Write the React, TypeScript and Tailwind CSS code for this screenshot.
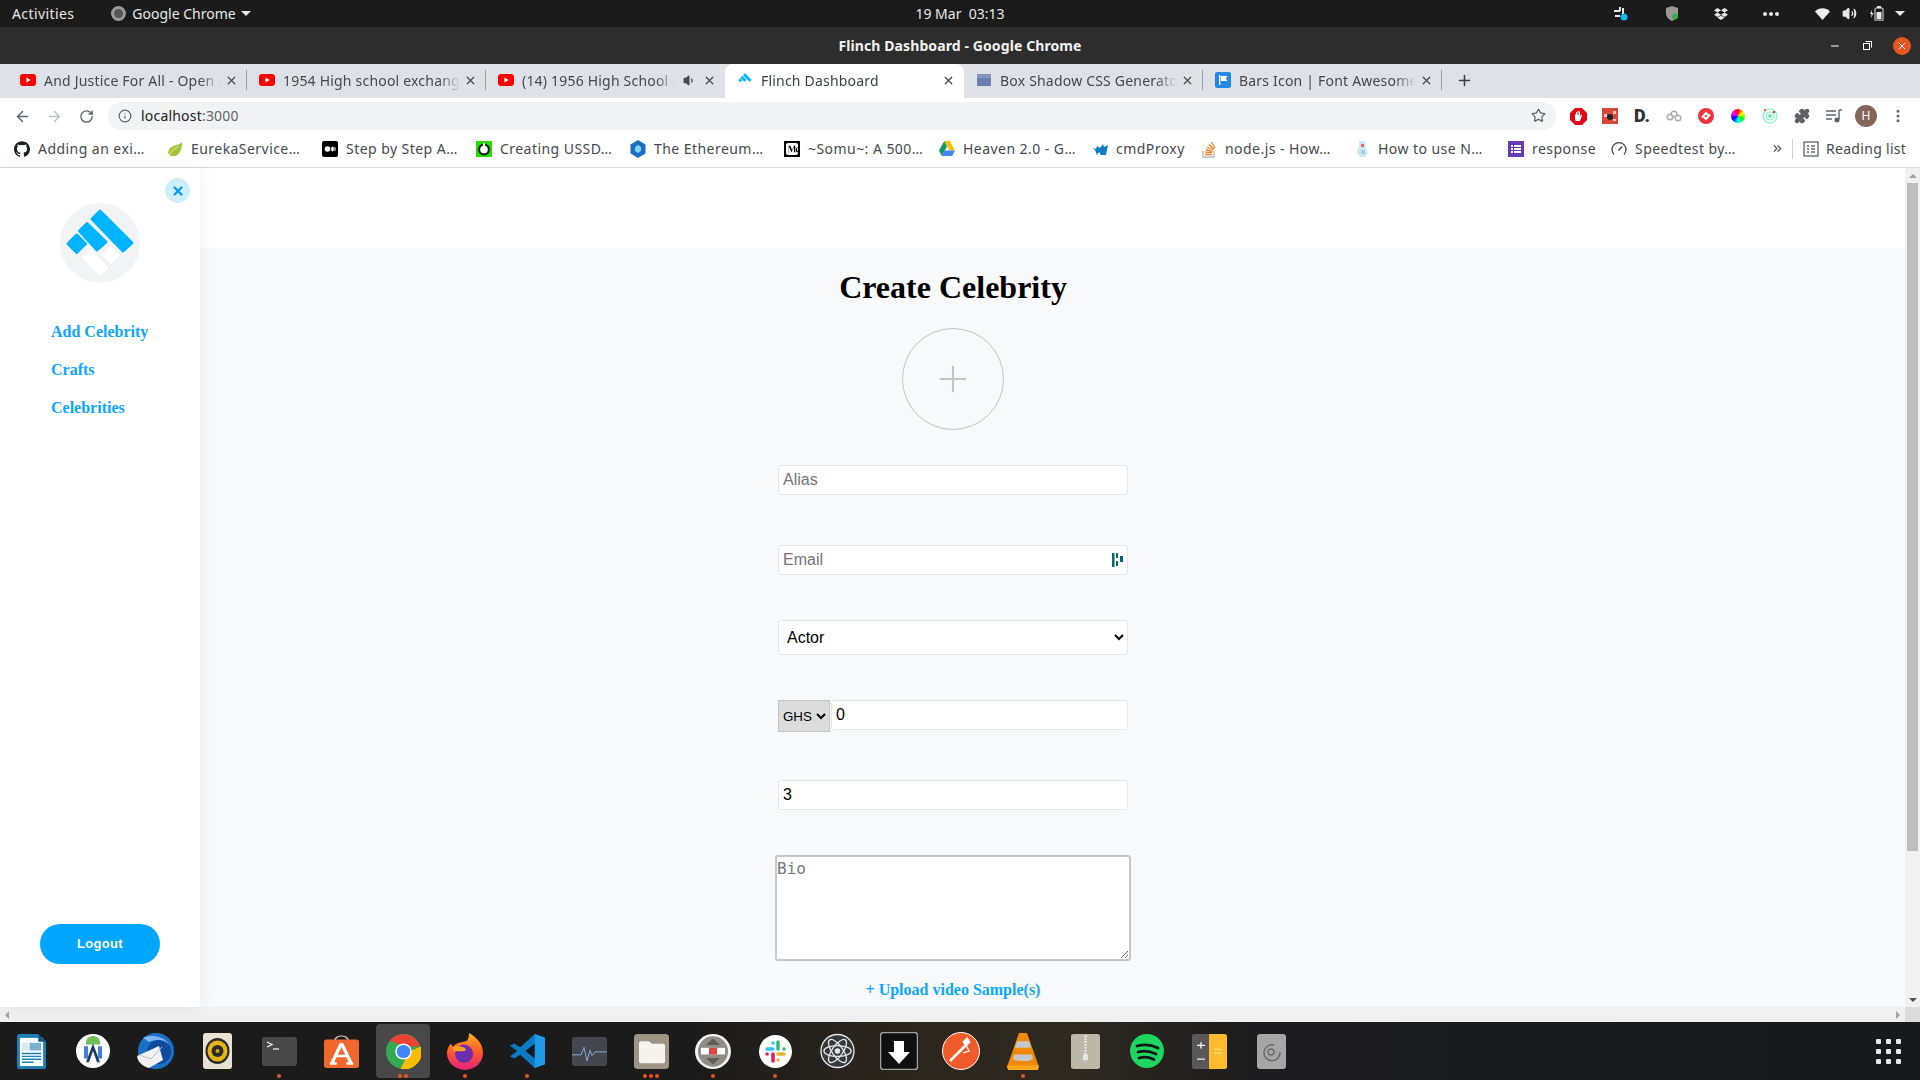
import React from 'react';
import { ArrowLeft, ArrowRight, RotateCw, Info, Star, X, Plus, MoreVertical, Puzzle, ChevronsRight, Minus, Volume2, Volume1 } from 'lucide-react';
import { SiGithub, SiMedium, SiDropbox } from 'react-icons/si';

const uiFont = "font-['Noto_Sans','Open_Sans',sans-serif]";

const Youtube = () => (
  <svg width="16" height="16" viewBox="0 0 16 16" className="shrink-0">
    <rect x="0" y="2" width="16" height="12" rx="3" fill="#f00" />
    <path d="M6.4 5.4 10.6 8l-4.2 2.6z" fill="#fff" />
  </svg>
);

const FlinchLogo = ({ size = 16, outline = false }: { size?: number; outline?: boolean }) => (
  <svg width={size} height={size} viewBox="0 0 80 80" className="shrink-0">
    <g fill="#00b4ff" stroke="#00b4ff" strokeWidth="3" strokeLinejoin="round">
      <polygon points="40,8 72,40 63,48 32,16" />
      <polygon points="27,20.5 46,39 37,47 19.5,28" />
      <polygon points="16.7,32 25.5,40.7 16.7,49.5 8,40.7" />
    </g>
    <g fill="#fff" stroke={outline ? '#eceded' : '#fff'} strokeWidth="1" strokeLinejoin="round">
      <polygon points="50.7,42 60.7,52 50.7,62 40.7,52" />
      <polygon points="30,45.3 50,64.7 40,73.7 20.7,54.7" />
    </g>
  </svg>
);

const tabs = [
  { title: 'And Justice For All - Open Culture', icon: <Youtube /> },
  { title: '1954 High school exchange students', icon: <Youtube /> },
  { title: '(14) 1956 High School Exchange', icon: <Youtube />, audio: true },
  { title: 'Flinch Dashboard', icon: <FlinchLogo />, active: true },
  {
    title: 'Box Shadow CSS Generator',
    icon: (
      <svg width="16" height="16" viewBox="0 0 16 16" className="shrink-0">
        <rect x="1" y="2" width="14" height="12" rx="1" fill="#6b7db3" />
        <rect x="1" y="2" width="14" height="4" fill="#8492bd" />
      </svg>
    ),
  },
  {
    title: 'Bars Icon | Font Awesome',
    icon: (
      <svg width="16" height="16" viewBox="0 0 16 16" className="shrink-0">
        <rect width="16" height="16" rx="2" fill="#228ae6" />
        <path d="M4 3h1.4v10H4zM6 4h6.5l-1.6 2.5L12.5 9H6z" fill="#fff" />
      </svg>
    ),
  },
];

const bookmarks = [
  { label: 'Adding an exi…', w: 'w-[153px]', icon: <SiGithub size={16} color="#1b1f23" /> },
  {
    label: 'EurekaService…',
    w: 'w-[155px]',
    icon: (
      <svg width="18" height="18" viewBox="0 0 18 18">
        <path d="M17 1C14 5 5 4 2 10c-2 4 1 7 5 7 7 0 10-7 10-16z" fill="#a4c639" />
        <path d="M3 15c3-5 6-7 10-9" stroke="#e8f2c0" strokeWidth="1" fill="none" />
      </svg>
    ),
  },
  {
    label: 'Step by Step A…',
    w: 'w-[154px]',
    icon: (
      <svg width="16" height="16" viewBox="0 0 16 16">
        <rect width="16" height="16" rx="2" fill="#000" />
        <circle cx="5.5" cy="8" r="2.8" fill="#fff" />
        <ellipse cx="10.5" cy="8" rx="1.4" ry="2.6" fill="#fff" />
        <ellipse cx="13" cy="8" rx="0.6" ry="2.3" fill="#fff" />
      </svg>
    ),
  },
  {
    label: 'Creating USSD…',
    w: 'w-[154px]',
    icon: (
      <svg width="16" height="16" viewBox="0 0 16 16">
        <rect width="16" height="16" fill="#22e000" />
        <circle cx="8" cy="8.5" r="6" fill="#222" />
        <circle cx="8" cy="8.5" r="3.8" fill="#fff" />
        <rect x="7" y="2" width="2" height="5" fill="#fff" />
      </svg>
    ),
  },
  {
    label: 'The Ethereum…',
    w: 'w-[154px]',
    icon: (
      <svg width="16" height="18" viewBox="0 0 16 18">
        <path d="M8 0l7.5 4.5v9L8 18 .5 13.500v-9z" fill="#1a6fc4" />
        <path d="M8 5l3 2v4l-3 2-3-2V7z" fill="#7fd4f0" />
      </svg>
    ),
  },
  {
    label: '~Somu~: A 500…',
    w: 'w-[155px]',
    icon: (
      <span className="flex h-4 w-4 items-center justify-center bg-black">
        <SiMedium size={12} color="#fff" />
      </span>
    ),
  },
  {
    label: 'Heaven 2.0 - G…',
    w: 'w-[153px]',
    icon: (
      <svg width="16" height="15" viewBox="0 0 16 15">
        <path d="M5.300 0h5.400l5.300 9.500h-5.400z" fill="#fbbc04" />
        <path d="M5.300 0 0 9.500 2.700 15l5.300-9.500z" fill="#0f9d58" />
        <path d="M2.700 15h10.600L16 9.500H5.400z" fill="#4285f4" />
      </svg>
    ),
  },
  {
    label: 'cmdProxy',
    w: 'w-[109px]',
    icon: (
      <svg width="16" height="12" viewBox="0 0 16 12">
        <path d="M0 5l4 1 1-3 3 2 3-4 1 3 4-2-2 10H9L7 9l-2 3-2-5z" fill="#0e7fc2" />
      </svg>
    ),
  },
  {
    label: 'node.js - How…',
    w: 'w-[153px]',
    icon: (
      <svg width="14" height="18" viewBox="0 0 14 18">
        <path d="M1 11v6h11v-6" stroke="#bcbbbb" strokeWidth="1.400" fill="none" />
        <path d="M3 14.500h7M3.200 12l7 .6M3.800 9.500l6.800 1.800M5 7l6.200 3M7 4.500l5 4.500M9.500 2l3.500 6" stroke="#f48024" strokeWidth="1.300" />
      </svg>
    ),
  },
  {
    label: 'How to use N…',
    w: 'w-[154px]',
    icon: (
      <svg width="14" height="18" viewBox="0 0 14 18">
        <path d="M4 1h6l1 6 2 6-3 4H5L2 12l2-5z" fill="#cfe8f6" />
        <path d="M6 4h3v3H6z" fill="#e9685a" />
        <path d="M6 10h4v4H6z" fill="#9fd0ee" />
      </svg>
    ),
  },
  {
    label: 'response',
    w: 'w-[103px]',
    icon: (
      <svg width="16" height="16" viewBox="0 0 16 16">
        <rect width="16" height="16" fill="#673ab7" />
        <path d="M3 4h2v2H3zM6 4h7v2H6zM3 7h2v2H3zM6 7h7v2H6zM3 10h2v2H3zM6 10h7v2H6z" fill="#fff" />
      </svg>
    ),
  },
  {
    label: 'Speedtest by…',
    w: 'w-[154px]',
    icon: (
      <svg width="16" height="16" viewBox="0 0 16 16" fill="none" stroke="#444" strokeWidth="1.300">
        <path d="M3 13.500A7 7 0 1 1 13 13.500" />
        <path d="M7.500 9.500 11 5.500" />
      </svg>
    ),
  },
];

const Ext = ({ children }: { children: React.ReactNode }) => (
  <div className="flex h-7 w-8 items-center justify-center">{children}</div>
);

const Extensions = () => (
  <div className="flex items-center">
    <Ext>
      <svg width="17" height="17" viewBox="0 0 17 17">
        <path d="M5 0h7l5 5v7l-5 5H5l-5-5V5z" fill="#e30613" />
        <path d="M5 12V6.500h1V4h1v3h.5V3h1v4H9V3.500h1V8l1.500-1.500.7.500L10 13H6z" fill="#fff" />
      </svg>
    </Ext>
    <Ext>
      <svg width="16" height="16" viewBox="0 0 16 16">
        <rect width="16" height="16" fill="#d9483b" />
        <circle cx="8" cy="9" r="3" fill="#222" />
        <path d="M2 6h3v3H2zM11 3h3v3h-3zM11 11h3v2h-3z" fill="#f6c9c4" />
      </svg>
    </Ext>
    <Ext>
      <span className="font-['Roboto',sans-serif] text-[18px] leading-none font-black text-[#333]">D.</span>
    </Ext>
    <Ext>
      <svg width="16" height="12" viewBox="0 0 16 12" fill="none" stroke="#aaa" strokeWidth="1.400">
        <circle cx="4" cy="7" r="2.800" />
        <circle cx="8" cy="4" r="2.800" />
        <circle cx="12" cy="8" r="2.800" />
      </svg>
    </Ext>
    <Ext>
      <svg width="16" height="16" viewBox="0 0 16 16">
        <circle cx="8" cy="8" r="8" fill="#f0333c" />
        <path d="M4 9.500 8 5l2 2M12 6.500 8 11 6 9" stroke="#fff" strokeWidth="2" fill="none" />
      </svg>
    </Ext>
    <Ext>
      <div className="h-[14px] w-[14px] rounded-full bg-[conic-gradient(#f00,#ff0,#0f0,#0ff,#00f,#f0f,#f00)]" />
    </Ext>
    <Ext>
      <svg width="16" height="16" viewBox="0 0 16 16" fill="none" stroke="#7ef0c0" strokeWidth="1.200">
        <circle cx="8" cy="8" r="7" />
        <circle cx="8" cy="8" r="4" />
        <circle cx="8" cy="8" r="1.500" fill="#5fd6a0" />
        <circle cx="3" cy="2" r="1.300" fill="#f08030" stroke="none" />
        <circle cx="12" cy="4" r="1.300" fill="#e04040" stroke="none" />
      </svg>
    </Ext>
    <Ext>
      <Puzzle size={16} fill="#5f6368" color="#5f6368" />
    </Ext>
    <Ext>
      <svg width="16" height="14" viewBox="0 0 16 14" fill="none" stroke="#5f6368" strokeWidth="1.400">
        <path d="M0 2h10M0 6h10M0 10h6" />
        <path d="M13 1v9.500" />
        <circle cx="11" cy="11" r="1.800" fill="#5f6368" />
        <path d="M13 1h3" />
      </svg>
    </Ext>
    <Ext>
      <div className="flex h-[22px] w-[22px] items-center justify-center rounded-full bg-[#84655a] font-['Noto_Sans',sans-serif] text-[12px] text-white">H</div>
    </Ext>
    <Ext>
      <MoreVertical size={16} color="#5f6368" strokeWidth={2.500} />
    </Ext>
  </div>
);

const TopBar = () => (
  <div className="flex h-[27px] shrink-0 items-center justify-between bg-[#1b1b1b] text-[14px] text-[#e8e8e8]">
    <div className="flex w-[400px] items-center pl-3">
      <span className="tracking-[0.4px]">Activities</span>
      <div className="ml-[37px] h-[15px] w-[15px] rounded-full border-[3px] border-[#999] bg-[#555]" />
      <span className="ml-[6px]">Google Chrome</span>
      <span className="ml-[5px] h-0 w-0 border-x-[5px] border-t-[5px] border-x-transparent border-t-[#e8e8e8]" />
    </div>
    <span>19 Mar&nbsp;&nbsp;03:13</span>
    <div className="flex w-[400px] items-center justify-end pr-[15px]">
      <svg width="14" height="14" viewBox="0 0 14 14" className="mr-[37px]">
        <path d="M0 3h6v2H0zM5 0h2v4H5zM1 8h5v2H1zM8 1h2v6H8z" fill="#e8e8e8" />
        <circle cx="10" cy="10" r="3.500" fill="#14b8e8" />
      </svg>
      <svg width="14" height="15" viewBox="0 0 14 15" className="mr-[35px]">
        <path d="M7 0l6 2v5c0 4-3 6.500-6 8-3-1.500-6-4-6-8V2z" fill="#9a9a9a" />
        <circle cx="10" cy="10.500" r="3" fill="#3cb043" />
      </svg>
      <span className="mr-[35px]">
        <SiDropbox size={14} color="#e8e8e8" />
      </span>
      <span className="mr-[36px] flex gap-[2px]">
        <i className="h-1 w-1 rounded-full bg-[#e8e8e8]" />
        <i className="h-1 w-1 rounded-full bg-[#e8e8e8]" />
        <i className="h-1 w-1 rounded-full bg-[#e8e8e8]" />
      </span>
      <svg width="15" height="12" viewBox="0 0 15 12" className="mr-[12px]">
        <path d="M0 3.500C4-.9 11-.9 15 3.500L7.500 12z" fill="#f0f0f0" />
      </svg>
      <Volume2 size={15} color="#e8e8e8" fill="#e8e8e8" className="mr-[13px]" />
      <svg width="14" height="15" viewBox="0 0 14 15" className="mr-[11px]">
        <rect x="5" y="2" width="8" height="13" rx="1" fill="none" stroke="#e8e8e8" />
        <rect x="7" y="0" width="4" height="2" fill="#e8e8e8" />
        <rect x="6.500" y="6" width="5" height="7.500" fill="#e8e8e8" />
        <path d="M2 4 0 8h1.500L1 12l2.500-5H2z" fill="#e8e8e8" />
      </svg>
      <span className="h-0 w-0 border-x-[5px] border-t-[5px] border-x-transparent border-t-[#e8e8e8]" />
    </div>
  </div>
);

const TitleBar = () => (
  <div className="flex h-[37px] shrink-0 items-center justify-between bg-[#2d2d2d] text-[14px] font-bold tracking-[0.1px] text-[#f2f2f2]">
    <div className="w-[200px]" />
    <span>Flinch Dashboard - Google Chrome</span>
    <div className="flex w-[200px] items-center justify-end pr-[9px] text-white">
      <Minus size={12} className="mr-[22px]" />
      <svg width="9" height="9" viewBox="0 0 9 9" fill="none" stroke="#fff" className="mr-[21px]">
        <rect x="0.500" y="2.500" width="6" height="6" />
        <path d="M2.500 .5h6v6" />
      </svg>
      <div className="flex h-[18px] w-[18px] items-center justify-center rounded-full bg-[#e95420]">
        <X size={12} color="#fff" strokeWidth={2} />
      </div>
    </div>
  </div>
);

const TabStrip = () => (
  <div className="flex h-[34px] shrink-0 items-end bg-[#dee1e6] pl-2 text-[14px] tracking-[0.2px] text-[#45494e]">
    {tabs.map((t, i) => (
      <div
        key={t.title}
        className={
          t.active
            ? 'flex h-[34px] w-[239px] items-center rounded-t-lg bg-white pb-[2px] pl-3 text-[#3c4043]'
            : 'flex h-[34px] w-[239px] items-center pb-[2px] pl-3'
        }
      >
        {t.icon}
        <span className="mr-1 ml-2 min-w-0 flex-1 overflow-hidden whitespace-nowrap [mask-image:linear-gradient(to_right,black_88%,transparent)]">{t.title}</span>
        {t.audio && <Volume1 size={13} fill="#45494e" className="mr-[7px] ml-1 shrink-0" />}
        <X size={13} strokeWidth={2.200} className="shrink-0" />
        <span className={i === 0 || i === 1 || i === 4 || i === 5 ? 'ml-2 h-5 w-px shrink-0 bg-[#9aa0a6]' : 'ml-2 h-5 w-px shrink-0'} />
      </div>
    ))}
    <div className="flex h-[34px] flex-1 items-center pb-[2px] pl-[14px]">
      <Plus size={17} color="#3c4043" strokeWidth={2.200} />
    </div>
  </div>
);

const Toolbar = () => (
  <div className="flex h-8 shrink-0 items-end bg-white pl-[14px]">
    <div className="flex h-7 items-center">
      <ArrowLeft size={17} color="#5f6368" strokeWidth={2} />
      <ArrowRight size={17} color="#bdc1c6" strokeWidth={2} className="ml-[15px]" />
      <RotateCw size={15} color="#5f6368" strokeWidth={2.200} className="ml-[16px]" />
      <div className="ml-[14px] flex h-7 w-[1448px] shrink-0 items-center rounded-full bg-[#f1f3f4] pr-[10px] pb-px pl-[10px] text-[14px] tracking-[0.2px]">
        <Info size={14} color="#5f6368" />
        <span className="ml-[9px] text-[#202124]">localhost</span>
        <span className="text-[#5f6368]">:3000</span>
        <Star size={15} color="#5f6368" className="ml-auto" />
      </div>
      <div className="ml-[6px]">
        <Extensions />
      </div>
    </div>
  </div>
);

const Bookmarks = () => (
  <div className="flex h-[38px] shrink-0 items-center border-b border-[#d9d9d9] bg-white pl-[14px] text-[14px] tracking-[0.45px] text-[#45494e]">
    {bookmarks.map((b) => (
      <div key={b.label} className={`flex shrink-0 items-center gap-2 whitespace-nowrap ${b.w}`}>
        <span className="flex w-4 shrink-0 items-center justify-center">{b.icon}</span>
        <span>{b.label}</span>
      </div>
    ))}
    <ChevronsRight size={13} color="#5f6368" strokeWidth={2.500} className="ml-[6px]" />
    <span className="ml-[8px] h-5 w-px bg-[#d0d0d0]" />
    <svg width="16" height="16" viewBox="0 0 16 16" fill="none" stroke="#5f6368" strokeWidth="1.300" className="ml-[10px]">
      <rect x="1" y="1" width="14" height="14" />
      <path d="M4 5h2M8 5h4M4 8h2M8 8h4M4 11h2M8 11h4" />
    </svg>
    <span className="ml-[7px] tracking-[0.3px]">Reading list</span>
  </div>
);

const Sidebar = () => (
  <aside className="z-10 flex w-[200px] shrink-0 flex-col items-center bg-white shadow-[0_0_20px_rgba(0,0,0,0.06)]">
    <div className="flex w-full justify-end pt-[10px] pr-[10px]">
      <button className="flex h-[25px] w-[25px] items-center justify-center rounded-full bg-[#cdeeff]">
        <X size={14} color="#0a9cf5" strokeWidth={4} />
      </button>
    </div>
    <div className="flex h-20 w-20 items-center justify-center rounded-full bg-[#f3f4f6]">
      <FlinchLogo size={80} outline />
    </div>
    <nav className="mt-10 flex w-full flex-col gap-5 pl-[51px] font-['Liberation_Serif',serif] text-[16px] leading-[18px] font-bold text-[#0ca6ff]">
      <a>Add Celebrity</a>
      <a>Crafts</a>
      <a>Celebrities</a>
    </nav>
    <button className="mt-auto mb-[43px] h-10 w-[120px] rounded-full bg-[#00a6ff] font-['Liberation_Sans',sans-serif] text-[13px] font-bold tracking-[0.3px] text-white">
      Logout
    </button>
  </aside>
);

const inputClass =
  'h-[30px] w-[350px] rounded-[3px] border border-[#e4e5e7] bg-white px-1 text-[16px] text-black outline-none placeholder:text-[#757575]';

const CreateForm = () => (
  <div className="flex w-[356px] flex-col items-center font-['Liberation_Sans',sans-serif]">
    <h1 className="mt-[21px] font-['Liberation_Serif',serif] text-[32px] leading-[37px] font-bold whitespace-nowrap text-black">Create Celebrity</h1>
    <div className="mt-[22px] flex h-[102px] w-[102px] items-center justify-center rounded-full border border-[#c4c4c4]">
      <Plus size={42} color="#c4c4c4" strokeWidth={1.200} />
    </div>
    <input className={`mt-[35px] ${inputClass}`} placeholder="Alias" />
    <div className="relative mt-[50px] h-[30px]">
      <input className={inputClass} placeholder="Email" />
      <svg width="11" height="14" viewBox="0 0 11 14" className="absolute top-2 right-[5px]" fill="#0f6474">
        <path d="M0 0h2.500v14H0zM4 0h2v5H4zM4 8h2v5H4zM8 3h3v6H8z" />
      </svg>
    </div>
    <select className="mt-[45px] h-[35px] w-[350px] rounded-[3px] border border-[#e4e5e7] bg-white px-1 text-[16px] text-black outline-none [appearance:auto]" defaultValue="Actor">
      <option>Actor</option>
      <option>Musician</option>
    </select>
    <div className="mt-[45px] flex h-8 w-[350px] items-start">
      <select className="h-8 w-[52px] shrink-0 border border-[#c4c4c4] bg-[#dcdcdc] text-[13.333px] text-black outline-none [appearance:auto]" defaultValue="GHS">
        <option>GHS</option>
      </select>
      <input className={`ml-px !w-[297px] ${inputClass}`} defaultValue="0" />
    </div>
    <input className={`mt-12 ${inputClass}`} defaultValue="3" />
    <textarea
      className="mt-[45px] block h-[106px] w-[356px] rounded-[3px] border-2 border-[#c8c8c8] bg-white p-0 font-['DejaVu_Sans_Mono',monospace] text-[16px] text-black outline-none placeholder:text-[#757575]"
      placeholder="Bio"
    />
    <a className="mt-5 font-['Liberation_Serif',serif] text-[16px] leading-[18px] font-bold whitespace-nowrap text-[#0ca6ff]">+ Upload video Sample(s)</a>
  </div>
);

const VScrollbar = () => (
  <div className="flex w-[15px] shrink-0 flex-col items-center bg-[#f1f1f1]">
    <span className="mt-[6px] h-0 w-0 border-x-[4px] border-b-[4px] border-x-transparent border-b-[#a3a3a3]" />
    <div className="mt-[5px] h-[668px] w-[11px] bg-[#bdbdbd]" />
    <span className="mt-auto mb-[5px] h-0 w-0 border-x-[4px] border-t-[4px] border-x-transparent border-t-[#505050]" />
  </div>
);

const HScrollbar = () => (
  <div className="flex h-[15px] shrink-0 items-center bg-[#f0f0f0]">
    <span className="ml-[5px] h-0 w-0 border-y-[4px] border-r-[4px] border-y-transparent border-r-[#a3a3a3]" />
    <span className="mr-[5px] ml-auto h-0 w-0 border-y-[4px] border-l-[4px] border-y-transparent border-l-[#a3a3a3]" />
    <span className="h-[15px] w-[15px] bg-[#dcdcdc]" />
  </div>
);

const Dot = () => <i className="h-[4px] w-[4px] rounded-full bg-[#e9541f]" />;

const dockIcons: { dots: number; active?: boolean; icon: React.ReactNode }[] = [
  {
    dots: 0,
    icon: (
      <svg width="29" height="35" viewBox="0 0 30 36" preserveAspectRatio="none">
        <path d="M2 0h20l8 8v26a2 2 0 0 1-2 2H2a2 2 0 0 1-2-2V2a2 2 0 0 1 2-2z" fill="#1c7fb5" />
        <rect x="3" y="4" width="24" height="29" fill="#fff" />
        <path d="M5 9h7v8H5z" fill="#d7e8f2" />
        <path d="M13 9h12v8H13z" fill="#7ab0cf" />
        <path d="M5 20h20M5 23h20M5 26h20M5 29h12" stroke="#1c7fb5" strokeWidth="1.500" />
        <path d="M22 0l8 8h-8z" fill="#0d5a86" />
      </svg>
    ),
  },
  {
    dots: 0,
    icon: (
      <svg width="34" height="34" viewBox="0 0 34 36" preserveAspectRatio="none">
        <ellipse cx="17" cy="18" rx="17" ry="18" fill="#fff" />
        <path d="M10 9a7 7 0 0 1 14 0v2H10z" fill="#6fbf5a" />
        <path d="M17 10l-7 20h3l4-12 4 12h3z" fill="#1f3a5f" />
        <rect x="8" y="13" width="4" height="13" fill="#3d7fd9" />
        <rect x="22" y="13" width="4" height="13" fill="#3d7fd9" />
      </svg>
    ),
  },
  {
    dots: 0,
    icon: (
      <svg width="38" height="38" viewBox="0 0 38 38">
        <circle cx="20" cy="19" r="18" fill="#1b6fc7" />
        <path d="M7 6c8-4 20-2 26 6-6-4-14-5-20-2z" fill="#7cb6ec" />
        <circle cx="23" cy="20" r="12" fill="#0f4a9c" />
        <path d="M1 24l22-10 4 14-14 8C6 34 2 30 1 24z" fill="#f2f2f5" />
        <path d="M3 23l12 4 11-12" stroke="#b9bfce" fill="none" />
      </svg>
    ),
  },
  {
    dots: 0,
    icon: (
      <svg width="29" height="36" viewBox="0 0 29 36">
        <rect width="29" height="36" rx="3" fill="#e8e2d2" />
        <ellipse cx="14.500" cy="18" rx="12" ry="13" fill="#2a2a2a" />
        <ellipse cx="14.500" cy="18" rx="10" ry="10.500" fill="#e5b616" />
        <ellipse cx="14.500" cy="18" rx="6" ry="6" fill="#2a2a2a" />
        <circle cx="14.500" cy="18" r="2" fill="#c9a316" />
      </svg>
    ),
  },
  {
    dots: 1,
    icon: (
      <svg width="35" height="29" viewBox="0 0 35 29">
        <rect width="35" height="29" rx="3" fill="#484848" />
        <path d="M5 5l5 2.500-5 2.500" stroke="#eee" strokeWidth="1.300" fill="none" />
        <path d="M11 12h6" stroke="#eee" strokeWidth="1.300" />
      </svg>
    ),
  },
  {
    dots: 0,
    icon: (
      <svg width="35" height="33" viewBox="0 0 36 44" preserveAspectRatio="none">
        <path d="M11 8c0-9 14-9 14 0" stroke="#d9c7b0" strokeWidth="1.500" fill="none" />
        <rect y="6" width="36" height="38" rx="3" fill="#f0682e" />
        <path d="M18 11 8 38M18 11l10 27M11 28h14M6 38h7M23 38h7" stroke="#fff" strokeWidth="3.500" fill="none" />
      </svg>
    ),
  },
  {
    dots: 2,
    active: true,
    icon: (
      <svg width="35" height="35" viewBox="0 0 36 48" preserveAspectRatio="none">
        <ellipse cx="18" cy="24" rx="18" ry="24" fill="#34a853" />
        <path d="M4 9A18 24 0 0 1 35 17H18z" fill="#ea4335" />
        <path d="M36 17A18 24 0 0 1 15 47.800L24 24z" fill="#fbbc04" />
        <ellipse cx="18" cy="24" rx="8.500" ry="11" fill="#fff" />
        <ellipse cx="18" cy="24" rx="7" ry="9" fill="#4285f4" />
      </svg>
    ),
  },
  {
    dots: 1,
    icon: (
      <svg width="36" height="37" viewBox="0 0 36 48" preserveAspectRatio="none">
        <defs>
          <linearGradient id="fx" x1="0" y1="0" x2="0" y2="1">
            <stop offset="0" stopColor="#ffb21e" />
            <stop offset="0.500" stopColor="#ff5a2a" />
            <stop offset="1" stopColor="#e51f7e" />
          </linearGradient>
        </defs>
        <path d="M22 0c8 6 14 14 14 26 0 12-8 22-18 22S0 38 0 26c0-6 2-10 4-12l2 4c3-6 10-6 14-8 2-3 2-7 2-10z" fill="url(#fx)" />
        <ellipse cx="17" cy="27" rx="9" ry="12" fill="#6b2fb0" />
        <path d="M5 18c6-2 14 0 14 4-3 3-8 1-12 2z" fill="#ffa01e" />
      </svg>
    ),
  },
  {
    dots: 1,
    icon: (
      <svg width="35" height="34" viewBox="0 0 34 46" preserveAspectRatio="none">
        <path d="M24 0l10 5v36l-10 5-14-18-6 5-4-3 7-7-7-7 4-3 6 5z" fill="#0a7ac5" />
        <path d="M24 0l10 5v36l-10 5z" fill="#1f9ae8" />
        <path d="M24 13v20l-9-10z" fill="#171a1c" />
      </svg>
    ),
  },
  {
    dots: 0,
    icon: (
      <svg width="35" height="29" viewBox="0 0 35 39" preserveAspectRatio="none">
        <rect width="35" height="39" rx="3" fill="#43464c" />
        <path d="M0 24h9l3-10 3 18 3-14 2 7 3-5h12" stroke="#8fb4e8" strokeWidth="1" fill="none" />
      </svg>
    ),
  },
  {
    dots: 3,
    icon: (
      <svg width="35" height="35" viewBox="0 0 35 43" preserveAspectRatio="none">
        <rect width="35" height="43" rx="4" fill="#9d9484" />
        <path d="M5 11a2 2 0 0 1 2-2h8l3 3h11a2 2 0 0 1 2 2v20a2 2 0 0 1-2 2H7a2 2 0 0 1-2-2z" fill="#f5f3ee" />
      </svg>
    ),
  },
  {
    dots: 1,
    icon: (
      <svg width="36" height="35" viewBox="0 0 36 48" preserveAspectRatio="none">
        <ellipse cx="18" cy="24" rx="18" ry="24" fill="#f2f2f2" />
        <ellipse cx="18" cy="24" rx="15" ry="21" fill="#8e8e86" />
        <path d="M18 6l7 9H11zM18 42l7-9H11z" fill="#5f5f5a" />
        <rect x="6" y="19" width="24" height="9" fill="#fff" />
        <rect x="14" y="19" width="8" height="9" fill="#e0433f" />
      </svg>
    ),
  },
  {
    dots: 1,
    icon: (
      <svg width="33" height="33" viewBox="0 0 33 33">
        <circle cx="16.500" cy="16.500" r="16.500" fill="#fff" />
        <g strokeWidth="3.500" strokeLinecap="round">
          <path d="M8 14h6" stroke="#36c5f0" />
          <path d="M14 8v0" stroke="#36c5f0" />
          <path d="M19 7v7" stroke="#2eb67d" />
          <path d="M25 14h0" stroke="#2eb67d" />
          <path d="M19 19h6" stroke="#ecb22e" />
          <path d="M19 25h0" stroke="#ecb22e" />
          <path d="M14 19v7" stroke="#e01e5a" />
          <path d="M8 19h0" stroke="#e01e5a" />
        </g>
      </svg>
    ),
  },
  {
    dots: 0,
    icon: (
      <svg width="35" height="36" viewBox="0 0 36 36" fill="none" stroke="#e5e5e5" strokeWidth="1.400">
        <circle cx="18" cy="18" r="17" fill="#36383b" />
        <ellipse cx="18" cy="18" rx="14" ry="5.500" />
        <ellipse cx="18" cy="18" rx="14" ry="5.500" transform="rotate(55 18 18)" />
        <ellipse cx="18" cy="18" rx="14" ry="5.500" transform="rotate(-55 18 18)" />
        <circle cx="18" cy="18" r="2.200" fill="#e5e5e5" />
      </svg>
    ),
  },
  {
    dots: 0,
    icon: (
      <svg width="38" height="38" viewBox="0 0 38 38">
        <rect x="0.500" y="0.500" width="37" height="37" rx="3" fill="#101010" stroke="#a0a0a0" strokeWidth="1.500" />
        <path d="M14 9h10v11h6L19 32 8 20h6z" fill="#fff" />
      </svg>
    ),
  },
  {
    dots: 0,
    icon: (
      <svg width="38" height="38" viewBox="0 0 38 38">
        <circle cx="19" cy="19" r="18.500" fill="#ef5b2a" stroke="#fff" />
        <path d="M8 29 24 13M24 13l3-3-2-3-3 3z" stroke="#fff" strokeWidth="2.500" fill="#fff" />
        <path d="M24 13l3 6-6 2" stroke="#fff" strokeWidth="1.300" fill="none" />
      </svg>
    ),
  },
  {
    dots: 1,
    icon: (
      <svg width="32" height="37" viewBox="0 0 32 50" preserveAspectRatio="none">
        <path d="M12 0h8l12 46-2 4H2l-2-4z" fill="#f08a05" />
        <path d="M10 11h12l2 9H8zM7 29h18l1 6c-3 4-17 4-20 0z" fill="#c4c8c8" />
        <path d="M0 44h32l-1 6H1z" fill="#f9a71c" />
      </svg>
    ),
  },
  {
    dots: 0,
    icon: (
      <svg width="29" height="35" viewBox="0 0 29 48" preserveAspectRatio="none">
        <rect width="29" height="48" rx="3" fill="#bdb7a8" />
        <path d="M14.500 2v28" stroke="#f0f0f0" strokeWidth="2.500" strokeDasharray="2 2" />
        <rect x="12" y="28" width="5" height="8" fill="#e6e6e6" />
      </svg>
    ),
  },
  {
    dots: 0,
    icon: (
      <svg width="34" height="34" viewBox="0 0 34 34">
        <circle cx="17" cy="17" r="17" fill="#1ed760" />
        <path d="M7 12c7-2 14-1.500 21 2M8 18c6-1.500 12-1 18 2M9 24c5-1.500 10-1 15 1.500" stroke="#13181a" strokeWidth="2.800" strokeLinecap="round" fill="none" />
      </svg>
    ),
  },
  {
    dots: 0,
    icon: (
      <svg width="35" height="35" viewBox="0 0 35 46" preserveAspectRatio="none">
        <path d="M3 0h15v46H3a3 3 0 0 1-3-3V3a3 3 0 0 1 3-3z" fill="#58585a" />
        <path d="M17 0h15a3 3 0 0 1 3 3v40a3 3 0 0 1-3 3H17z" fill="#fdbb2d" />
        <path d="M5 15h8M9 11v8M5 33h8" stroke="#eee" strokeWidth="1.500" />
        <path d="M22 20h8M22 25h8" stroke="#ffe59c" strokeWidth="1.500" />
      </svg>
    ),
  },
  {
    dots: 0,
    icon: (
      <svg width="29" height="35" viewBox="0 0 29 35" fill="none">
        <rect width="29" height="35" rx="3" fill="#a6a6a6" />
        <path d="M17 11a8 8 0 1 0 6 7" stroke="#6d6d6d" strokeWidth="1.500" />
        <circle cx="14" cy="18" r="3" stroke="#6d6d6d" strokeWidth="1.500" />
      </svg>
    ),
  },
];

const Dock = () => (
  <div className="flex h-[58px] shrink-0 items-stretch justify-between bg-[linear-gradient(90deg,#1b1b1b_0%,#1b1b1b_36%,#2a241d_45%,#2f2a20_55%,#1c1c1e_66%,#17191b_100%)]">
    <div className="flex">
      {dockIcons.map((d, i) => (
        <div
          key={i}
          className={
            d.active
              ? 'mx-1 my-[2px] flex w-[54px] flex-col items-center rounded-sm bg-white/20'
              : 'mx-1 my-[2px] flex w-[54px] flex-col items-center'
          }
        >
          <div className="mt-1 flex h-[46px] w-full items-center justify-center">{d.icon}</div>
          <div className="flex h-[3px] items-center gap-[2px]">
            {Array.from({ length: d.dots }).map((_, n) => (
              <Dot key={n} />
            ))}
          </div>
        </div>
      ))}
    </div>
    <div className="mt-[17px] mr-[19px] grid h-[24px] grid-cols-3 gap-x-[5px] gap-y-[5px]">
      {Array.from({ length: 9 }).map((_, n) => (
        <i key={n} className="h-[5px] w-[5px] rounded-[1px] bg-[#e8e8e8]" />
      ))}
    </div>
  </div>
);

const App: React.FC = () => {
  return (
    <div className={`flex h-screen w-full flex-col overflow-hidden bg-white ${uiFont}`}>
      <TopBar />
      <TitleBar />
      <TabStrip />
      <Toolbar />
      <Bookmarks />

      {/* page area */}
      <div className="flex min-h-0 flex-1">
        <div className="flex min-w-0 flex-1 flex-col">
          <div className="flex min-h-0 flex-1">
            <Sidebar />
            <main className="flex min-w-0 flex-1 flex-col overflow-hidden">
              <div className="h-20 shrink-0 bg-white" />
              <div className="flex-1 bg-[#f8f9fb] pl-[575px]">
                <CreateForm />
              </div>
            </main>
          </div>
        </div>
        <VScrollbar />
      </div>
      <HScrollbar />
      <Dock />
    </div>
  );
};

export default App;
